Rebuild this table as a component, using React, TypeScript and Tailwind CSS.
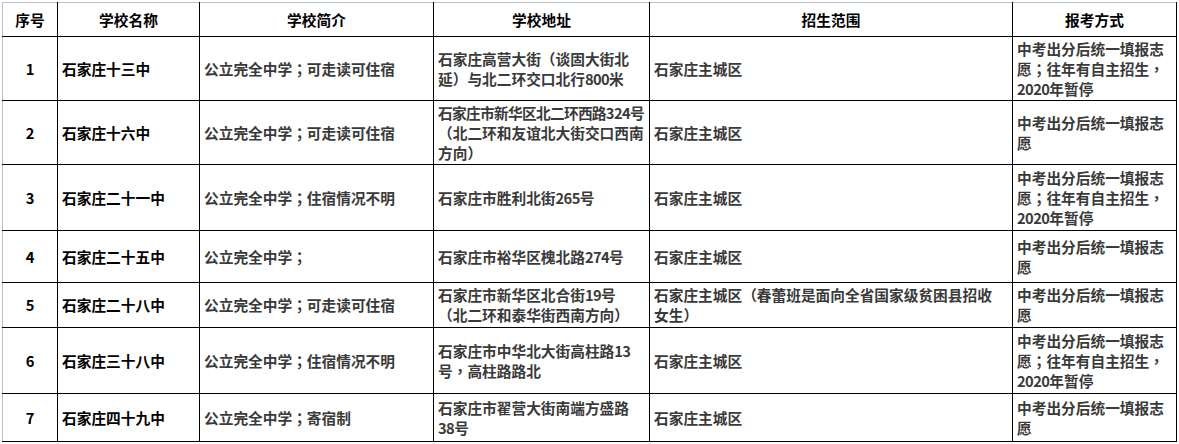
import React from 'react';

type Row = {
  no: string;
  name: string;
  intro: string;
  addr: string[];
  range: string[];
  apply: string[];
  h: string;
};

const rows: Row[] = [
  {
    no: '1',
    name: '石家庄十三中',
    intro: '公立完全中学；可走读可住宿',
    addr: ['石家庄高营大街（谈固大街北', '延）与北二环交口北行800米'],
    range: ['石家庄主城区'],
    apply: ['中考出分后统一填报志', '愿；往年有自主招生，', '2020年暂停'],
    h: 'h-[64px]',
  },
  {
    no: '2',
    name: '石家庄十六中',
    intro: '公立完全中学；可走读可住宿',
    addr: ['石家庄市新华区北二环西路324号', '（北二环和友谊北大街交口西南', '方向）'],
    range: ['石家庄主城区'],
    apply: ['中考出分后统一填报志', '愿'],
    h: 'h-[64px]',
  },
  {
    no: '3',
    name: '石家庄二十一中',
    intro: '公立完全中学；住宿情况不明',
    addr: ['石家庄市胜利北街265号'],
    range: ['石家庄主城区'],
    apply: ['中考出分后统一填报志', '愿；往年有自主招生，', '2020年暂停'],
    h: 'h-[66px]',
  },
  {
    no: '4',
    name: '石家庄二十五中',
    intro: '公立完全中学；',
    addr: ['石家庄市裕华区槐北路274号'],
    range: ['石家庄主城区'],
    apply: ['中考出分后统一填报志', '愿'],
    h: 'h-[52px]',
  },
  {
    no: '5',
    name: '石家庄二十八中',
    intro: '公立完全中学；可走读可住宿',
    addr: ['石家庄市新华区北合街19号', '（北二环和泰华街西南方向）'],
    range: ['石家庄主城区（春蕾班是面向全省国家级贫困县招收', '女生）'],
    apply: ['中考出分后统一填报志', '愿'],
    h: 'h-[45px]',
  },
  {
    no: '6',
    name: '石家庄三十八中',
    intro: '公立完全中学；住宿情况不明',
    addr: ['石家庄市中华北大街高柱路13', '号，高柱路路北'],
    range: ['石家庄主城区'],
    apply: ['中考出分后统一填报志', '愿；往年有自主招生，', '2020年暂停'],
    h: 'h-[66px]',
  },
  {
    no: '7',
    name: '石家庄四十九中',
    intro: '公立完全中学；寄宿制',
    addr: ['石家庄市翟营大街南端方盛路', '38号'],
    range: ['石家庄主城区'],
    apply: ['中考出分后统一填报志', '愿'],
    h: 'h-[48px]',
  },
];

// full-width ；and ， sit centred in the reference, as in the TC face
const Text = ({ t }: { t: string }) => {
  const parts = t.split(/([；，]|\d+)/).filter(Boolean);
  return (
    <>
      {parts.map((p, i) =>
        p === '；' || p === '，' ? (
          <span key={i} style={{ fontFamily: '"Noto Sans CJK TC", sans-serif' }}>{p}</span>
        ) : /^\d+$/.test(p) ? (
          <span key={i} className="tracking-[-0.6px]">{p}</span>
        ) : (
          <React.Fragment key={i}>{p}</React.Fragment>
        )
      )}
    </>
  );
};

const Lines = ({ items }: { items: string[] }) => (
  <>
    {items.map((t, i) => (
      <div key={i} className={`whitespace-nowrap ${t.length > 15 && t.length < 18 ? 'tracking-[-0.7px]' : ''}`}>
        <Text t={t} />
      </div>
    ))}
  </>
);

const cell = 'border border-black px-[4px] py-0 align-middle';

export default function App() {
  return (
    <div
      className="w-[1179px] h-[444px] bg-white overflow-hidden pt-[2px] pl-[2px]"
      style={{ fontFamily: '"Noto Sans CJK SC", "Noto Sans", sans-serif' }}
    >
      <table className="border-collapse table-fixed w-[1174px] text-[14.7px] leading-[20px] font-bold">
        <colgroup>
          <col className="w-[55px]" />
          <col className="w-[142px]" />
          <col className="w-[234px]" />
          <col className="w-[216px]" />
          <col className="w-[363px]" />
          <col className="w-[164px]" />
        </colgroup>
        <thead>
          <tr className="h-[34px] text-black">
            <th className={`${cell} border-t-[#b7c3d3] border-l-[#b7c3d3] text-center`}>序号</th>
            <th className={`${cell} border-t-[#b7c3d3] text-center`}>学校名称</th>
            <th className={`${cell} border-t-[#b7c3d3] text-center`}>学校简介</th>
            <th className={`${cell} border-t-[#b7c3d3] text-center`}>学校地址</th>
            <th className={`${cell} border-t-[#b7c3d3] text-center`}>招生范围</th>
            <th className={`${cell} border-t-[#b7c3d3] text-center`}>报考方式</th>
          </tr>
        </thead>
        <tbody>
          {rows.map((r) => (
            <tr key={r.no} className={r.h}>
              <td className={`${cell} border-l-[#b7c3d3] text-center text-black`}>{r.no}</td>
              <td className={`${cell} text-black`}>{r.name}</td>
              <td className={`${cell} text-[#3a3a3a] whitespace-nowrap`}><Text t={r.intro} /></td>
              <td className={`${cell} text-[#3a3a3a]`}><Lines items={r.addr} /></td>
              <td className={`${cell} text-[#3a3a3a]`}><Lines items={r.range} /></td>
              <td className={`${cell} text-[#3a3a3a]`}><Lines items={r.apply} /></td>
            </tr>
          ))}
        </tbody>
      </table>
    </div>
  );
}
